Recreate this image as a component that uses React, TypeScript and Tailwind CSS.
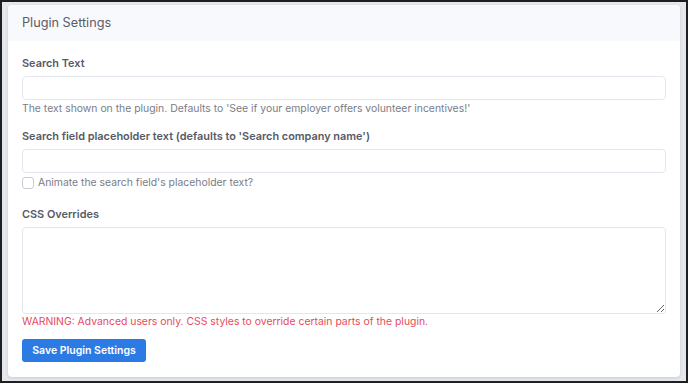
export default function App() {
  return (
    <div
      className="w-[688px] h-[383px] border-2 border-[#1f1f1f] bg-[#e4e7ee] pt-[3px] px-[6px] pb-[4px]"
      style={{ fontFamily: "Inter, 'Noto Sans', sans-serif" }}
    >
      <div className="h-full flex flex-col rounded-[4px] bg-white shadow-[0_1px_3px_rgba(0,0,0,0.12)] overflow-hidden">
        <div className="h-[36px] flex items-center px-[14px] bg-[#f8f9fc] text-[12.7px] text-[#5a5c69]">
          Plugin Settings
        </div>

        <div className="flex flex-col px-[14px] pt-[14px]">
          <label className="text-[10.9px] leading-[16px] font-semibold text-[#575a66]">Search Text</label>
          <input
            type="text"
            className="mt-[5px] h-[24px] w-full rounded-[4px] border border-[#e3e6ed] bg-white outline-none"
          />
          <p className="mt-[2px] text-[10.4px] leading-[14px] text-[#7a7c88]">
            The text shown on the plugin. Defaults to 'See if your employer offers volunteer incentives!'
          </p>

          <label className="mt-[12px] text-[10.9px] leading-[16px] font-semibold text-[#575a66]">
            Search field placeholder text (defaults to 'Search company name')
          </label>
          <input
            type="text"
            className="mt-[5px] h-[24px] w-full rounded-[4px] border border-[#e3e6ed] bg-white outline-none"
          />
          <div className="mt-[3px] flex items-center gap-[4px] h-[14px]">
            <span className="w-[12px] h-[12px] rounded-[3px] border border-[#c9ccd4] bg-white" />
            <span className="text-[10.4px] leading-[14px] text-[#7a7c88]">
              Animate the search field's placeholder text?
            </span>
          </div>

          <label className="mt-[16px] text-[10.9px] leading-[16px] font-semibold text-[#575a66]">CSS Overrides</label>
          <textarea className="mt-[5px] h-[87px] w-full rounded-[4px] border border-[#e3e6ed] bg-white outline-none" />
          <p className="mt-[1px] text-[10.4px] leading-[14px] text-[#e74a5b]">
            WARNING: Advanced users only. CSS styles to override certain parts of the plugin.
          </p>

          <div className="mt-[7px]">
            <button className="h-[23px] w-[124px] rounded-[3px] bg-[#2c7be5] text-white text-[10.5px] font-semibold">
              Save Plugin Settings
            </button>
          </div>
        </div>
      </div>
    </div>
  );
}
